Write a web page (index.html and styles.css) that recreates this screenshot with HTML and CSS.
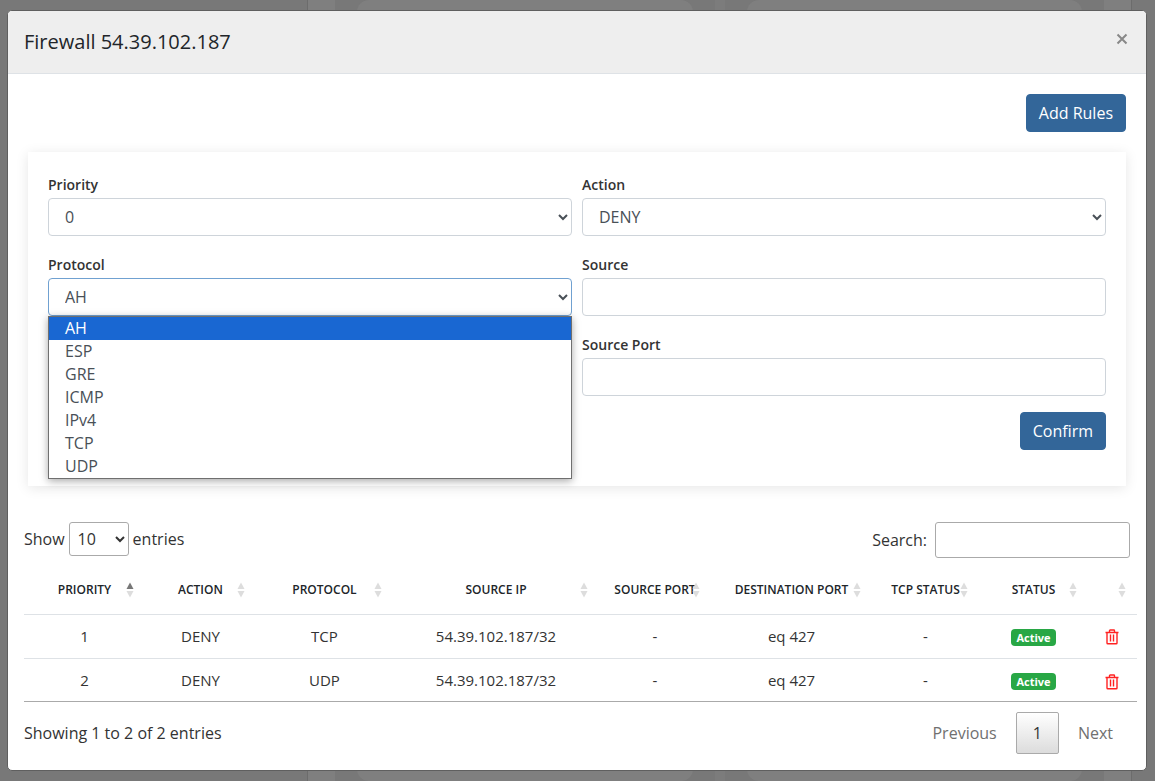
FILE: index.html
```html
<!DOCTYPE html>
<html lang="en">
<head>
<meta charset="utf-8">
<title>Firewall 54.39.102.187</title>
<link rel="stylesheet" href="styles.css">
</head>
<body>
<svg class="sprite" aria-hidden="true">
  <symbol id="trash" viewBox="0 0 14 16">
    <path d="M0.500 3.500h13M4.500 3V1.700q0-.7.7-.7h3.600q.7 0 .7.700V3M2 4v10q0 .8.8.8h8.400q.8 0 .8-.8V4M5.500 5.500v7M8.500 5.500v7" fill="none" stroke="currentColor" stroke-width="1.400"/>
  </symbol>
  <symbol id="sort" viewBox="0 0 8 16">
    <path class="sort-up" d="M4 0.500L7.500 7h-7z"/>
    <path class="sort-down" d="M4 15.500L0.500 9h7z"/>
  </symbol>
</svg>
<div class="backdrop">
  <div class="page-side"></div>
  <div class="page-main">
    <div class="page-card"></div>
    <div class="page-gutter"></div>
    <div class="page-card"></div>
  </div>
  <div class="page-edge"></div>
</div>
<main class="modal" role="dialog" aria-labelledby="modal-title">
  <header class="modal-header">
    <h1 class="modal-title" id="modal-title">Firewall 54.39.102.187</h1>
    <button class="close" type="button" aria-label="Close">
      <svg viewBox="0 0 12 12"><path d="M1.500 1.500l9 9M10.500 1.500l-9 9" fill="none" stroke="currentColor" stroke-width="2"/></svg>
    </button>
  </header>
  <div class="modal-body">
    <div class="toolbar"><button class="btn" type="button">Add Rules</button></div>
    <form class="rule-form">
      <div class="field">
        <label for="priority">Priority</label>
        <select class="control" id="priority"><option>0</option></select>
      </div>
      <div class="field">
        <label for="action">Action</label>
        <select class="control" id="action"><option>DENY</option></select>
      </div>
      <div class="field">
        <label for="protocol">Protocol</label>
        <select class="control is-open" id="protocol"><option>AH</option></select>
        <ul class="options" role="listbox" aria-label="Protocol">
          <li class="selected" role="option" aria-selected="true">AH</li>
          <li role="option">ESP</li>
          <li role="option">GRE</li>
          <li role="option">ICMP</li>
          <li role="option">IPv4</li>
          <li role="option">TCP</li>
          <li role="option">UDP</li>
        </ul>
      </div>
      <div class="field">
        <label for="source">Source</label>
        <input class="control" id="source" type="text">
      </div>
      <div class="field field-right">
        <label for="source-port">Source Port</label>
        <input class="control" id="source-port" type="text">
      </div>
      <div class="form-actions"><button class="btn" type="button">Confirm</button></div>
    </form>
    <div class="table-controls">
      <label class="length">Show
        <select class="length-select"><option>10</option></select>
        entries</label>
      <label class="search">Search: <input class="search-input" type="search"></label>
    </div>
    <div class="table-wrap">
      <table class="rules">
        <colgroup>
          <col class="c-priority"><col class="c-action"><col class="c-protocol"><col class="c-ip"><col class="c-port"><col class="c-dest"><col class="c-tcp"><col class="c-status"><col class="c-delete">
        </colgroup>
        <thead>
          <tr>
            <th class="sorted">Priority<svg class="sort"><use href="#sort"/></svg></th>
            <th>Action<svg class="sort"><use href="#sort"/></svg></th>
            <th>Protocol<svg class="sort"><use href="#sort"/></svg></th>
            <th>Source IP<svg class="sort"><use href="#sort"/></svg></th>
            <th>Source Port<svg class="sort"><use href="#sort"/></svg></th>
            <th>Destination Port<svg class="sort"><use href="#sort"/></svg></th>
            <th>TCP Status<svg class="sort"><use href="#sort"/></svg></th>
            <th>Status<svg class="sort"><use href="#sort"/></svg></th>
            <th><svg class="sort"><use href="#sort"/></svg></th>
          </tr>
        </thead>
        <tbody>
          <tr>
            <td>1</td><td>DENY</td><td>TCP</td><td>54.39.102.187/32</td><td>-</td><td>eq 427</td><td>-</td>
            <td><span class="badge">Active</span></td>
            <td><button class="delete" type="button" aria-label="Delete rule 1"><svg><use href="#trash"/></svg></button></td>
          </tr>
          <tr>
            <td>2</td><td>DENY</td><td>UDP</td><td>54.39.102.187/32</td><td>-</td><td>eq 427</td><td>-</td>
            <td><span class="badge">Active</span></td>
            <td><button class="delete" type="button" aria-label="Delete rule 2"><svg><use href="#trash"/></svg></button></td>
          </tr>
        </tbody>
      </table>
    </div>
    <footer class="table-footer">
      <div>Showing 1 to 2 of 2 entries</div>
      <nav class="pager" aria-label="Pages">
        <a href="#">Previous</a>
        <a class="current" href="#" aria-current="page">1</a>
        <a href="#">Next</a>
      </nav>
    </footer>
  </div>
</main>
</body>
</html>
```
FILE: styles.css
```css
* { box-sizing: border-box; }

body {
  margin: 0;
  min-height: 100vh;
  background: #787878;
  color: #333;
  font: 16px/24px "Open Sans", "Noto Sans", sans-serif;
}

button, input, select { font: inherit; color: inherit; }

.sprite { display: none; }

/* Dimmed page behind the dialog */
.backdrop {
  position: fixed;
  inset: 0;
  display: flex;
}
.page-side { width: 308px; border-right: 1px solid #6c6c6c; }
.page-main {
  flex: 1;
  display: flex;
  gap: 22px;
  border: solid #7f7f7f;
  border-width: 0 27px;
  padding: 0 22px;
}
.page-card { flex: 1; background: #7f7f7f; border-radius: 12px; }
.page-gutter { width: 10px; background: #7c7c7c; }
.page-edge { width: 24px; border-left: 1px solid #6c6c6c; }

.modal {
  position: relative;
  margin: 10px 8px 10px 7px;
  background: #fff;
  border: 1px solid #5f5f5f;
  border-radius: 5px;
}
.modal-header {
  display: flex;
  justify-content: space-between;
  align-items: flex-start;
  padding: 16px;
  background: #eee;
  border-bottom: 1px solid #dee2e6;
  border-radius: 4px 4px 0 0;
}
.modal-title {
  margin: 0;
  font-size: 20px;
  line-height: 30px;
  font-weight: 400;
  color: #212529;
}
.close {
  display: flex;
  padding: 6px 2px;
  border: 0;
  background: none;
  color: #888;
}
.close svg { width: 12px; height: 12px; }

.modal-body { padding: 16px; }
.toolbar { display: flex; justify-content: flex-end; padding: 4px; }

.btn {
  padding: 6px 12px;
  border: 1px solid #336699;
  border-radius: 4px;
  background: #336699;
  color: #fff;
  font-weight: 500;
}

.rule-form {
  display: grid;
  grid-template-columns: 1fr 1fr;
  gap: 16px 10px;
  margin: 16px 4px 36px;
  padding: 20px 20px 36px;
  box-shadow: 0 2px 12px rgba(0, 0, 0, .1);
}
.field { position: relative; display: flex; flex-direction: column; }
.field-right { grid-column: 2; }
.field label {
  font-size: 14px;
  line-height: 26px;
  font-weight: 600;
  color: #333;
}
.control {
  width: 100%;
  height: 38px;
  padding: 6px 12px;
  border: 1px solid #ced4da;
  border-radius: 4px;
  background: #fff;
  color: #495057;
}
.control.is-open { border-color: #70a1d1; }
.options {
  position: absolute;
  z-index: 1;
  top: 100%;
  left: 0;
  right: 0;
  margin: 0;
  padding: 0;
  list-style: none;
  background: #fff;
  border: 1px solid #6f6f6f;
  box-shadow: 0 2px 8px rgba(0, 0, 0, .35);
  color: #495057;
}
.options li { padding: 0 16px; line-height: 23px; }
.options .selected { background: #1967d2; color: #fff; }
.form-actions { grid-column: 2; display: flex; justify-content: flex-end; }

.table-controls { display: flex; justify-content: space-between; align-items: flex-start; }
.length { display: flex; align-items: center; gap: 4px; }
.length-select {
  width: 60px;
  height: 34px;
  padding: 4px;
  border: 1px solid #aaa;
  border-radius: 3px;
  background: #fff;
}
.search { display: flex; align-items: center; gap: 8px; }
.search-input {
  width: 195px;
  height: 36px;
  padding: 5px;
  border: 1px solid #aaa;
  border-radius: 3px;
  background: #fff;
}

.table-wrap { margin: 6px -7px 0 0; }
.rules {
  width: 100%;
  table-layout: fixed;
  border-collapse: separate;
  border-spacing: 0;
  border-bottom: 1px solid #aaa;
  text-align: center;
}
.c-priority { width: 10.87%; }
.c-action { width: 9.97%; }
.c-protocol { width: 12.31%; }
.c-ip { width: 18.51%; }
.c-port { width: 10.06%; }
.c-dest { width: 14.47%; }
.c-tcp { width: 9.61%; }
.c-status { width: 9.79%; }
.c-delete { width: 4.4%; }
.rules th {
  position: relative;
  height: 50px;
  padding: 2px 0 0;
  font-size: 12px;
  line-height: 18px;
  font-weight: 600;
  text-transform: uppercase;
  white-space: nowrap;
  color: #212529;
}
.rules td {
  height: 44px;
  padding: 0 0 2px;
  border-top: 1px solid #dee2e6;
  font-size: 15px;
}
.rules tbody tr:last-child td { height: 43px; padding-bottom: 0; }
.sort {
  position: absolute;
  right: 11px;
  top: 18px;
  width: 8px;
  height: 16px;
}
.sorted .sort { --up: #777; }
.sort-up { fill: var(--up, #ddd); }
.sort-down { fill: #ddd; }
.badge {
  display: inline-block;
  padding: 3px 5px;
  border-radius: 4px;
  background: #28a745;
  color: #fff;
  font-size: 11px;
  line-height: 11px;
  font-weight: 700;
  vertical-align: middle;
}
.delete {
  padding: 0;
  border: 0;
  background: none;
  color: #f22;
  vertical-align: middle;
}
.delete svg { display: block; width: 14px; height: 16px; }

.table-footer { display: flex; justify-content: space-between; align-items: center; padding-top: 10px; }
.pager { display: flex; gap: 2px; }
.pager a {
  padding: 8px 16px;
  border: 1px solid transparent;
  border-radius: 2px;
  color: #707070;
  text-decoration: none;
}
.pager .current {
  border-color: #aaa;
  background: linear-gradient(#fff, #dcdcdc);
  color: #333;
}
```
